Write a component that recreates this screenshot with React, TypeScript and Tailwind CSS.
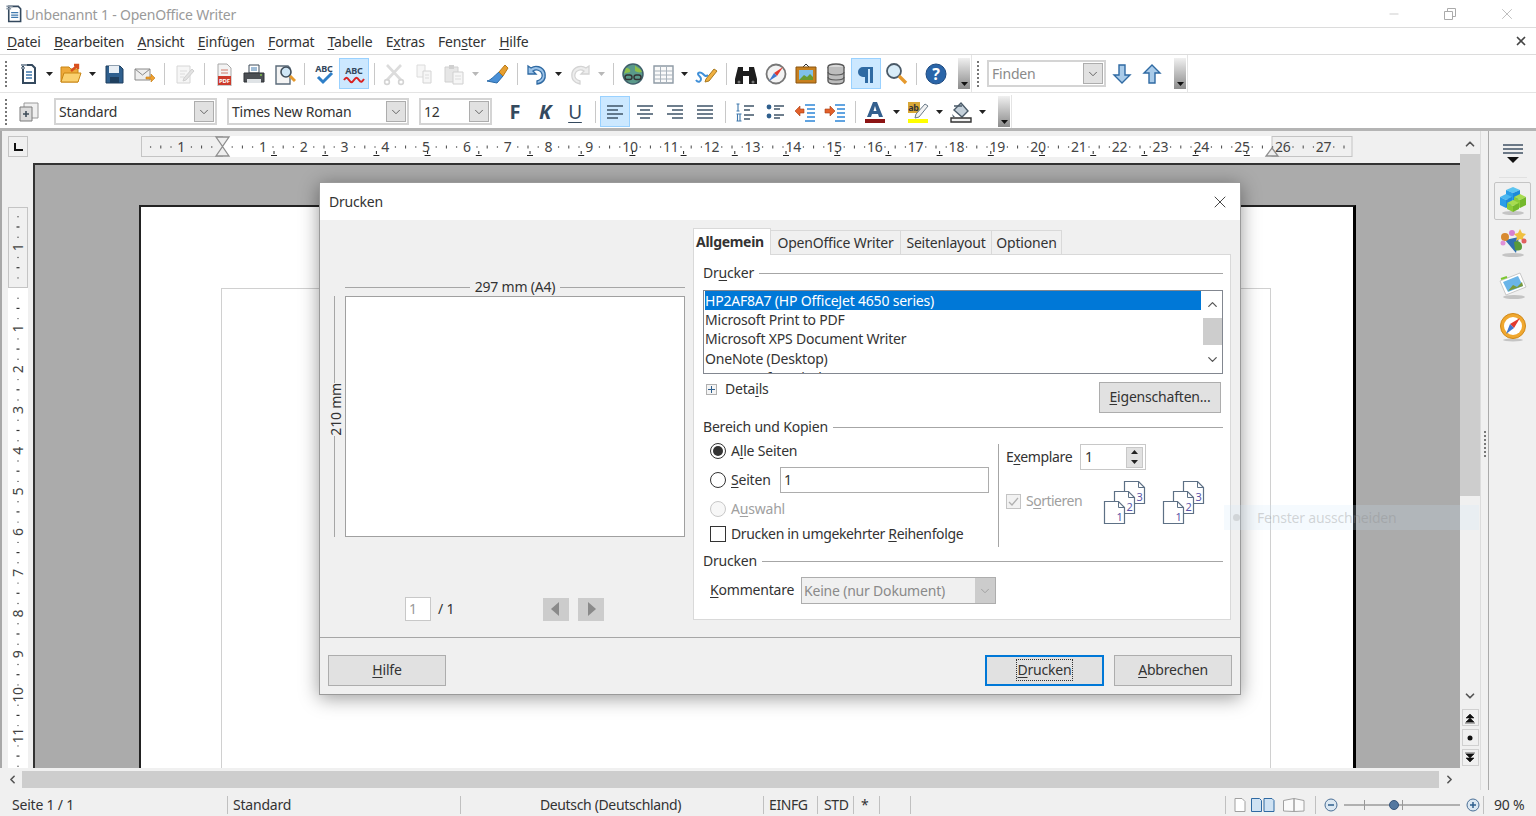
import type { ReactNode } from "react"
import { ChevronDown, ChevronUp, ChevronLeft, ChevronRight, X, Minus } from "lucide-react"

const U = ({ children }: { children: ReactNode }) => <span className="underline underline-offset-2">{children}</span>

function Svg({ children, size = 24 }: { children: ReactNode; size?: number }) {
  return (
    <svg width={size} height={size} viewBox="0 0 24 24" fill="none">
      {children}
    </svg>
  )
}

// toolbar button, every icon sits in a 30px slot
function Tb({ children, on }: { children: ReactNode; on?: boolean }) {
  return (
    <div
      className={
        on
          ? "w-[30px] h-[31px] flex items-center justify-center bg-[#cce8ff] border border-[#99d1ff]"
          : "w-[30px] h-[31px] flex items-center justify-center"
      }
    >
      {children}
    </div>
  )
}

function Caret({ faded }: { faded?: boolean }) {
  return (
    <div className="w-[13px] flex justify-center">
      <svg width="7" height="4" viewBox="0 0 7 4">
        <path d="M0 0h7L3.5 4z" fill={faded ? "#b8b8b8" : "#222"} />
      </svg>
    </div>
  )
}

const Sep = () => (
  <div className="w-[10px] flex justify-center">
    <div className="w-px h-[22px] bg-[#c8c8c8]" />
  </div>
)

const Grip = () => <div className="h-[26px] border-l-2 border-dotted border-[#777]" />

const Handle = () => (
  <div className="w-[12px] h-[31px] bg-linear-to-b from-[#f0f0f0] to-[#8c8c8c] flex items-end justify-center pb-[3px]">
    <svg width="7" height="4" viewBox="0 0 7 4">
      <path d="M0 0h7L3.5 4z" fill="#111" />
    </svg>
  </div>
)

function Combo({ text, w, faded }: { text: string; w: string; faded?: boolean }) {
  return (
    <div className={`${w} h-[27px] flex items-center bg-white border-2 border-[#d4d4d4] pl-[3px] pr-px`}>
      <span className={faded ? "flex-1 text-[#8a8a8a]" : "flex-1 text-[#333]"}>{text}</span>
      <div className="w-[20px] h-[21px] bg-[#e1e1e1] border border-[#adadad] flex items-center justify-center">
        <ChevronDown size={14} strokeWidth={1.5} className="text-[#555]" />
      </div>
    </div>
  )
}

const ic = {
  newDoc: (
    <Svg>
      <path d="M7 3h9l3 3v15H7z" fill="#fff" stroke="#34495e" strokeWidth="2" />
      <path d="M5 6h4M5 3h6" stroke="#8a98a6" strokeWidth="2" />
      <path d="M10 10h6M10 13h6M10 16h6" stroke="#3f78ad" strokeWidth="1.6" />
    </Svg>
  ),
  open: (
    <Svg>
      <path d="M2 5h8l2 2h7v13H2z" fill="#eea93a" stroke="#c98614" />
      <path d="M2 20l3-9h17l-3 9z" fill="#fad06f" stroke="#c98614" />
      <path d="M12 9l6-5M15 3h4v4" stroke="#d9501e" strokeWidth="2.4" />
    </Svg>
  ),
  save: (
    <Svg>
      <path d="M4 4h14l3 3v14H4z" fill="#2f5f8d" stroke="#1f3f5e" />
      <path d="M7 4h10v7H7z" fill="#e8eef4" />
      <path d="M8 15h9v6H8z" fill="#1f3f5e" />
    </Svg>
  ),
  mail: (
    <Svg>
      <path d="M3 7h15v11H3z" fill="#eee" stroke="#8a8a8a" />
      <path d="M3 7l7.5 6L18 7" stroke="#8a8a8a" />
      <path d="M14 15h5v-3l4 4-4 4v-3h-5z" fill="#f0a030" stroke="#c07810" strokeWidth=".6" />
    </Svg>
  ),
  edit: (
    <Svg>
      <path d="M5 4h13v17H5z" fill="#f6f6f6" stroke="#d6d6d6" />
      <path d="M8 9h7M8 12h5M8 15h4" stroke="#dcdcdc" />
      <path d="M12 16l8-9 2 2-8 9-3 1z" fill="#e2e2e2" stroke="#d0d0d0" />
    </Svg>
  ),
  pdf: (
    <Svg>
      <path d="M6 2h9l4 4v18H6z" fill="#f3f3f3" stroke="#a8a8a8" />
      <path d="M9 8h7M9 11h7" stroke="#d07a6a" />
      <path d="M6 14h13v9H6z" fill="#cc3a2b" />
      <text x="12.5" y="21" textAnchor="middle" fontSize="6" fontWeight="700" fill="#fff">PDF</text>
    </Svg>
  ),
  print: (
    <Svg>
      <path d="M7 3h10v8H7z" fill="#fff" stroke="#3f4d5a" />
      <path d="M9 6h6M9 8h6" stroke="#3f78ad" />
      <path d="M2 11h20v9H2z" fill="#4b4f54" stroke="#2f3236" />
      <path d="M5 17h14v4H5z" fill="#dfe3e6" />
      <path d="M18 13h2" stroke="#7fc24a" strokeWidth="1.5" />
    </Svg>
  ),
  preview: (
    <Svg>
      <path d="M4 4h12l2 2v16H4z" fill="#f4f4f4" stroke="#5b6b7a" strokeWidth="1.4" />
      <circle cx="14" cy="10" r="5" fill="#cfe6f6" stroke="#3f4d5a" strokeWidth="1.6" />
      <path d="M18 14l5 5" stroke="#e69a2e" strokeWidth="3" />
    </Svg>
  ),
  spell: (
    <Svg>
      <text x="12" y="10" textAnchor="middle" fontSize="9" fontWeight="700" fill="#34495e">ABC</text>
      <path d="M6 15l5 5 9-9" stroke="#2e7fc8" strokeWidth="3" />
    </Svg>
  ),
  autoSpell: (
    <Svg>
      <text x="12" y="12" textAnchor="middle" fontSize="9" fontWeight="700" fill="#34495e">ABC</text>
      <path d="M2 18c2-3 3-3 5 0s3 3 5 0 3-3 5 0 3 2 5-1" stroke="#d92020" strokeWidth="2" />
    </Svg>
  ),
  cut: (
    <Svg>
      <path d="M5 3l14 15M19 3L5 18" stroke="#dcdcdc" strokeWidth="2.6" />
      <circle cx="5" cy="20" r="2.4" stroke="#d4d4d4" strokeWidth="1.6" />
      <circle cx="19" cy="20" r="2.4" stroke="#d4d4d4" strokeWidth="1.6" />
    </Svg>
  ),
  copy: (
    <Svg>
      <path d="M5 3h8v12H5z" fill="#f6f6f6" stroke="#dcdcdc" />
      <path d="M11 9h8v12h-8z" fill="#f6f6f6" stroke="#d4d4d4" />
      <path d="M13 13h4M13 16h4" stroke="#dcdcdc" />
    </Svg>
  ),
  paste: (
    <Svg>
      <path d="M3 5h13v15H3z" fill="#e6e6e6" stroke="#d0d0d0" />
      <path d="M7 3h5v4H7z" fill="#d0d0d0" />
      <path d="M11 10h10v12H11z" fill="#f6f6f6" stroke="#d0d0d0" />
      <path d="M13 14h6M13 17h6" stroke="#dcdcdc" />
    </Svg>
  ),
  brush: (
    <Svg>
      <path d="M14 10l4 4-6 7-10-2c4-1 6-4 12-9z" fill="#4a90d6" stroke="#2a6aa8" />
      <path d="M14 10l6-7 3 3-5 8z" fill="#e8a030" stroke="#b87a18" />
    </Svg>
  ),
  undo: (
    <Svg>
      <path d="M3 4v8h8L8 9c3-2 8-1 9 3 1 3-1 6-5 7v3c6-1 9-5 8-11-2-7-10-8-14-5z" fill="#9cc3e8" stroke="#2f6aa3" strokeWidth="1.3" />
    </Svg>
  ),
  redo: (
    <Svg>
      <path d="M21 4v8h-8l3-3c-3-2-8-1-9 3-1 3 1 6 5 7v3C6 21 3 17 4 11c2-7 10-8 14-5z" fill="#ededed" stroke="#d4d4d4" strokeWidth="1.3" />
    </Svg>
  ),
  globe: (
    <Svg>
      <circle cx="12" cy="12" r="10" fill="#5a9a8a" stroke="#3f5f6a" strokeWidth="1.5" />
      <path d="M5 6c3 0 5 2 4 4-2 1-4 0-6 2M14 3c1 3 6 3 7 7-3 1-5 0-7-1z" fill="#8ec04a" />
      <rect x="4" y="13" width="7" height="4.5" rx="2.2" stroke="#333" strokeWidth="1.4" />
      <rect x="13" y="13" width="7" height="4.5" rx="2.2" stroke="#333" strokeWidth="1.4" />
    </Svg>
  ),
  table: (
    <Svg>
      <path d="M3 4h19v17H3z" fill="#fafafa" stroke="#8e9aa5" strokeWidth="1.4" />
      <path d="M3 9h19M3 13h19M3 17h19M9.5 4v17M15.5 4v17" stroke="#a8b2bb" />
    </Svg>
  ),
  draw: (
    <Svg>
      <path d="M2 18c2 3 5 2 5-1s-3-3-3-5 3-2 5 0 3 3 5 1" stroke="#3f8fd8" strokeWidth="2" />
      <path d="M12 17l8-10 3 2-8 10-4 1z" fill="#f0b040" stroke="#a87a20" />
    </Svg>
  ),
  binoculars: (
    <Svg>
      <path d="M4 5h5v4h6V5h5l3 12v5h-8v-8H9v8H1v-5z" fill="#1e1e1e" />
      <circle cx="5" cy="20" r="1.5" fill="#777" />
      <circle cx="19" cy="20" r="1.5" fill="#777" />
    </Svg>
  ),
  compass: (
    <Svg>
      <circle cx="12" cy="12" r="9.5" fill="#f3f3f3" stroke="#777" strokeWidth="1.8" />
      <path d="M19 5l-6 9-3-3z" fill="#e23a30" />
      <path d="M5 19l5-8 3 3z" fill="#3f78d0" />
    </Svg>
  ),
  gallery: (
    <Svg>
      <path d="M9 5l3-3 3 3" stroke="#333" />
      <path d="M2 5h20v16H2z" fill="#c8801e" stroke="#8a5510" />
      <path d="M5 8h14v10H5z" fill="#7fc0e8" />
      <path d="M5 18l5-5 3 2 3-3 3 3v3z" fill="#6a9a30" />
    </Svg>
  ),
  database: (
    <Svg>
      <ellipse cx="12" cy="5" rx="8" ry="3" fill="#d8d8d8" stroke="#5a5a5a" strokeWidth="1.4" />
      <path d="M4 5v14c0 4 16 4 16 0V5" fill="#bdbdbd" stroke="#5a5a5a" strokeWidth="1.4" />
      <path d="M4 10c0 4 16 4 16 0M4 15c0 4 16 4 16 0" stroke="#5a5a5a" strokeWidth="1.2" />
    </Svg>
  ),
  pilcrow: (
    <Svg>
      <path d="M11 5H9a5 5 0 0 0 0 10h2v6h3V7h2v14h3V5z" fill="#2f6aa3" />
    </Svg>
  ),
  zoom: (
    <Svg>
      <circle cx="10" cy="9" r="7" fill="#d8ecf8" stroke="#4a5a68" strokeWidth="1.8" />
      <path d="M15 14l7 7" stroke="#e69a2e" strokeWidth="3.4" />
    </Svg>
  ),
  help: (
    <Svg>
      <circle cx="12" cy="12" r="10" fill="#2a65a8" stroke="#1e4a80" />
      <text x="12" y="18" textAnchor="middle" fontSize="16" fontWeight="700" fill="#fff">?</text>
    </Svg>
  ),
  down: (
    <Svg>
      <path d="M9 3h6v10h5l-8 8-8-8h5z" fill="#a9cbe9" stroke="#2f6aa3" strokeWidth="1.4" />
    </Svg>
  ),
  up: (
    <Svg>
      <path d="M9 21h6V11h5l-8-8-8 8h5z" fill="#a9cbe9" stroke="#2f6aa3" strokeWidth="1.4" />
    </Svg>
  ),
  styles: (
    <Svg>
      <path d="M7 3h14v15H7z" fill="#f0f0f0" stroke="#9a9a9a" />
      <path d="M3 7h12v14H3z" fill="#dcdcdc" stroke="#7a7a7a" />
      <path d="M9 11v6M6 14h6" stroke="#3f4d5a" strokeWidth="1.6" />
    </Svg>
  ),
  left: (
    <Svg>
      <path d="M4 6h16M4 10h11M4 14h16M4 18h11" stroke="#3f5468" strokeWidth="1.7" />
    </Svg>
  ),
  center: (
    <Svg>
      <path d="M4 6h16M7 10h10M4 14h16M7 18h10" stroke="#3f5468" strokeWidth="1.7" />
    </Svg>
  ),
  right: (
    <Svg>
      <path d="M4 6h16M9 10h11M4 14h16M9 18h11" stroke="#3f5468" strokeWidth="1.7" />
    </Svg>
  ),
  justify: (
    <Svg>
      <path d="M4 6h16M4 10h16M4 14h16M4 18h16" stroke="#3f5468" strokeWidth="1.7" />
    </Svg>
  ),
  numbers: (
    <Svg>
      <path d="M11 6h10M11 10h6M11 15h10M11 19h6" stroke="#3f5468" strokeWidth="1.7" />
      <path d="M5 4v7M3.5 4h3M3.5 11h3M3.5 14h5M3.5 21h5M4.500 14v7M7 14v7" stroke="#3f78ad" strokeWidth="1.1" />
    </Svg>
  ),
  bullets: (
    <Svg>
      <circle cx="6" cy="7" r="2.4" fill="#2f5f8d" />
      <circle cx="6" cy="16" r="2.4" fill="#2f5f8d" />
      <path d="M11 6h10M11 9h6M11 15h10M11 18h6" stroke="#3f5468" strokeWidth="1.7" />
    </Svg>
  ),
  outdent: (
    <Svg>
      <path d="M12 5h10M14 9h8M14 13h8M14 17h8M12 21h10" stroke="#2e86d8" strokeWidth="1.6" />
      <path d="M11 9H7V6l-5 5 5 5v-3h4z" fill="#e2602a" stroke="#a83c10" strokeWidth=".6" />
    </Svg>
  ),
  indent: (
    <Svg>
      <path d="M12 5h10M14 9h8M14 13h8M14 17h8M12 21h10" stroke="#2e86d8" strokeWidth="1.6" />
      <path d="M2 9h5V6l5 5-5 5v-3H2z" fill="#e2602a" stroke="#a83c10" strokeWidth=".6" />
    </Svg>
  ),
  fontColor: (
    <Svg>
      <path d="M10 2h4l6 15h-4l-1-3H9l-1 3H4z" fill="#34608e" />
      <path d="M10.5 11h3L12 6z" fill="#fff" />
      <path d="M2 19h20v4H2z" fill="#8c1414" />
    </Svg>
  ),
  highlight: (
    <Svg>
      <path d="M2 2h12v11H2z" fill="#d8a838" />
      <text x="7.5" y="11" textAnchor="middle" fontSize="9" fontWeight="700" fill="#333">ab</text>
      <path d="M10 14l9-10 3 2-9 11-4 1z" fill="#f2f2f2" stroke="#6a7a88" />
      <path d="M2 19h20v4H2z" fill="#ffff00" />
    </Svg>
  ),
  bg: (
    <Svg>
      <path d="M5 10l7-7 7 8-6 6z" fill="#c4d0da" stroke="#4a5a68" strokeWidth="1.4" />
      <path d="M5 6h8" stroke="#4a5a68" strokeWidth="1.5" />
      <path d="M3 14l1 3h2z" fill="#4a5a68" />
      <path d="M2 18h20v4H2z" fill="#f2f2f2" stroke="#333" strokeWidth="1.4" />
    </Svg>
  ),
}

function HRuler() {
  const cm = Array.from({ length: 30 }, (_, i) => i - 2)
  const tabs = Array.from({ length: 20 }, (_, i) => 133 + i * 51.2)
  return (
    <svg width="1212" height="21" viewBox="0 0 1212 21" className="text-[14px]">
      <rect x="81" y="0" width="1050" height="21" fill="#fff" />
      <rect x="0.5" y="0.5" width="81" height="20" fill="#f0f0f0" stroke="#c4c4c4" />
      <rect x="1131" y="0.5" width="80" height="20" fill="#f0f0f0" stroke="#c4c4c4" />
      {cm.map((k) => {
        const x = 81 + k * 40.8
        return (
          <g key={k}>
            {k !== 0 && k > -2 && (
              <text x={x} y="16" textAnchor="middle" fill="#444">
                {k < 0 ? -k : k}
              </text>
            )}
            {x + 10 < 1205 && x + 10 > 0 && <circle cx={x + 10.2} cy="11" r=".7" fill="#444" />}
            {x + 20 < 1205 && x + 20 > 0 && <path d={`M${x + 20.4} 9.5v3`} stroke="#444" />}
            {x + 30 < 1205 && x + 30 > 0 && <circle cx={x + 30.6} cy="11" r=".7" fill="#444" />}
          </g>
        )
      })}
      {tabs.map((x) => (
        <path key={x} d={`M${x} 15v3M${x - 3} 19.5h6`} stroke="#222" />
      ))}
      <path d="M75 1h13l-6.5 9.5 6.5 9.5H75l6.5-9.5z" fill="#eee" stroke="#8e8e8e" strokeWidth="1.3" />
      <path d="M1131 12l6 8h-12z" fill="#eee" stroke="#8e8e8e" strokeWidth="1.3" />
    </svg>
  )
}

function VRuler() {
  const nums = [-1, 1, 2, 3, 4, 5, 6, 7, 8, 9, 10, 11]
  const rows = Array.from({ length: 14 }, (_, i) => i - 2)
  return (
    <svg width="20" height="561" viewBox="0 0 20 561" className="text-[14px]">
      <rect x="0" y="81" width="20" height="480" fill="#fff" />
      <rect x="0.5" y="0.5" width="19" height="80" fill="#f0f0f0" stroke="#c4c4c4" />
      {nums.map((k) => {
        const y = 81 + k * 40.7
        return (
          <text key={k} x="0" y="0" textAnchor="middle" fill="#444" transform={`translate(15 ${y}) rotate(-90)`}>
            {Math.abs(k)}
          </text>
        )
      })}
      {rows.map((k) => {
        const y = 81 + k * 40.7
        return (
          <g key={k}>
            <circle cx="10" cy={y + 10.2} r=".7" fill="#444" />
            <path d={`M8.5 ${y + 20.4}h3`} stroke="#333" strokeWidth="1.2" />
            <circle cx="10" cy={y + 30.6} r=".7" fill="#444" />
          </g>
        )
      })}
    </svg>
  )
}

function Collate() {
  const pages = [
    { x: 21.5, y: 0.5, n: "3" },
    { x: 11.5, y: 10.5, n: "2" },
    { x: 1.5, y: 20.5, n: "1" },
  ]
  return (
    <svg width="48" height="44" viewBox="0 0 48 44" className="text-[11px]">
      {pages.map((p) => (
        <g key={p.n}>
          <path d={`M${p.x} ${p.y}h14l6 6v16h-20z`} fill="#fff" stroke="#5d7085" strokeWidth="1.2" />
          <path d={`M${p.x + 14} ${p.y}v6h6`} fill="none" stroke="#5d7085" />
          <text x={p.x + 15} y={p.y + 19} textAnchor="middle" fill="#5a55a8">
            {p.n}
          </text>
        </g>
      ))}
    </svg>
  )
}

const Section = ({ children }: { children: ReactNode }) => (
  <div className="h-5 flex items-center gap-[5px]">
    <span>{children}</span>
    <div className="flex-1 border-t border-[#a6a6a6]" />
  </div>
)

const Radio = ({ on, off }: { on?: boolean; off?: boolean }) => (
  <div
    className={
      off
        ? "w-[16px] h-[16px] rounded-full border border-[#c8c8c8] bg-[#f7f7f7]"
        : "w-[16px] h-[16px] rounded-full border border-[#333] bg-white flex items-center justify-center"
    }
  >
    {on && <div className="w-[10px] h-[10px] rounded-full bg-[#333]" />}
  </div>
)

const DlgButton = ({ children, w, primary }: { children: ReactNode; w: string; primary?: boolean }) => (
  <div
    className={
      primary
        ? `${w} h-[31px] flex items-center justify-center bg-[#e1e1e1] border-2 border-[#0078d7] pb-[2px]`
        : `${w} h-[31px] flex items-center justify-center bg-[#e1e1e1] border border-[#adadad] pb-[2px]`
    }
  >
    {children}
  </div>
)

function PrintDialog() {
  return (
    <div className="absolute left-[319px] top-[182px] w-[922px] h-[513px] flex flex-col bg-[#f0f0f0] border border-[#9a9a9a] shadow-[0_3px_18px_rgba(0,0,0,0.4)] text-[#333]">
      <div className="h-[37px] bg-white flex items-center justify-between pl-[9px] pr-[10px]">
        <span>Drucken</span>
        <X size={20} strokeWidth={1} className="text-[#222]" />
      </div>

      <div className="h-[417px] flex">
        {/* preview side */}
        <div className="w-[373px] pl-[15px] pt-[56px]">
          <div className="ml-[10px] w-[340px] h-[20px] flex items-center gap-[5px] pt-[2px]">
            <div className="flex-1 border-t border-[#a6a6a6]" />
            <span>297 mm (A4)</span>
            <div className="flex-1 border-t border-[#a6a6a6]" />
          </div>
          <div className="h-[241px] flex">
            <div className="w-[10px] -ml-px flex flex-col items-start">
              <div className="h-[87px] border-l border-[#a6a6a6]" />
              <span className="[writing-mode:vertical-rl] rotate-180 -ml-[10px] py-[3px] leading-[18px]">210 mm</span>
              <div className="flex-1 border-l border-[#a6a6a6]" />
            </div>
            <div className="w-[340px] ml-px bg-white border border-[#a0a0a0]" />
          </div>
          <div className="mt-[60px] ml-[70px] h-[24px] flex items-center">
            <div className="w-[26px] h-[24px] bg-white border border-[#c8c8c8] pl-[3px] text-[#999] leading-[22px]">1</div>
            <span className="ml-[7px] w-[105px]">/ 1</span>
            <div className="w-[26px] h-[23px] bg-[#cccccc] flex items-center justify-center">
              <svg width="10" height="14" viewBox="0 0 10 14"><path d="M8 0v14L0 7z" fill="#8a8a8a" /></svg>
            </div>
            <div className="ml-[9px] w-[26px] h-[23px] bg-[#cccccc] flex items-center justify-center">
              <svg width="10" height="14" viewBox="0 0 10 14"><path d="M2 0v14l8-7z" fill="#8a8a8a" /></svg>
            </div>
          </div>
        </div>

        {/* tabs side */}
        <div className="w-[538px] pt-[8px]">
          <div className="h-[26px] flex items-end">
            <div className="w-[78px] h-[27px] -mb-px relative z-10 bg-white border-t border-x border-[#d9d9d9] flex items-center pl-[2px] font-bold tracking-[-0.3px]">
              Allgemein
            </div>
            <div className="w-[130px] h-[24px] border-t border-r border-[#d9d9d9] flex items-center justify-center">OpenOffice Writer</div>
            <div className="w-[91px] h-[24px] border-t border-r border-[#d9d9d9] flex items-center justify-center">Seitenlayout</div>
            <div className="w-[70px] h-[24px] border-t border-r border-[#d9d9d9] flex items-center justify-center">Optionen</div>
          </div>
          <div className="h-[366px] bg-white border border-[#d9d9d9] pl-[9px] pr-[7px] pt-[8px]">
            <Section>
              Dr<U>u</U>cker
            </Section>
            <div className="mt-[7px] h-[84px] border border-[#828790] flex overflow-hidden">
              <div className="flex-1 pl-px mr-[2px]">
                <div className="h-[19px] bg-[#0078d7] text-white flex items-center">HP2AF8A7 (HP OfficeJet 4650 series)</div>
                <div className="h-[19px] flex items-center">Microsoft Print to PDF</div>
                <div className="h-[20px] flex items-center">Microsoft XPS Document Writer</div>
                <div className="h-[19px] flex items-center">OneNote (Desktop)</div>
                <div className="h-[19px] flex items-center">OneNote for Windows 10</div>
              </div>
              <div className="w-[19px] flex flex-col items-center">
                <div className="h-[27px] flex items-center"><ChevronUp size={15} strokeWidth={2} className="text-[#555]" /></div>
                <div className="w-full h-[27px] bg-[#cdcdcd]" />
                <div className="flex-1 flex items-center"><ChevronDown size={15} strokeWidth={2} className="text-[#555]" /></div>
              </div>
            </div>
            <div className="mt-[8px] h-[27px] flex justify-between pr-[2px]">
              <div className="-mt-[3px] pl-[3px] h-[20px] flex items-center gap-[8px]">
                <div className="w-[11px] h-[11px] border border-[#b0b0b0] bg-[#f4f4f4] flex items-center justify-center">
                  <svg width="7" height="7" viewBox="0 0 7 7"><path d="M3.5 0v7M0 3.5h7" stroke="#2f5f8d" /></svg>
                </div>
                <span>Deta<U>i</U>ls</span>
              </div>
              <DlgButton w="w-[122px]">
                <span><U>E</U>igenschaften...</span>
              </DlgButton>
            </div>

            <div className="mt-[8px]">
              <Section>Bereich und Kopien</Section>
            </div>
            <div className="mt-[4px] h-[106px] flex">
              <div className="w-[295px] pl-[7px]">
                <div className="h-5 flex items-center gap-[5px]">
                  <Radio on />
                  <span>A<U>l</U>le Seiten</span>
                </div>
                <div className="mt-[6px] h-[26px] flex items-center gap-[5px]">
                  <Radio />
                  <span className="w-[44px]"><U>S</U>eiten</span>
                  <div className="w-[209px] h-[26px] border border-[#adadad] bg-white pl-[3px] leading-[24px]">1</div>
                </div>
                <div className="mt-[6px] h-5 flex items-center gap-[5px] text-[#a0a0a0]">
                  <Radio off />
                  <span>A<U>u</U>swahl</span>
                </div>
                <div className="mt-[5px] h-5 flex items-center gap-[5px]">
                  <div className="w-[16px] h-[16px] border border-[#333] bg-white" />
                  <span className="tracking-[-0.35px]">Drucken in umgekehrter <U>R</U>eihenfolge</span>
                </div>
              </div>
              <div className="mt-[3px] border-l border-[#a6a6a6] pl-[7px] flex-1">
                <div className="h-[26px] flex items-center">
                  <span className="w-[74px] -mt-px tracking-[-0.35px]">E<U>x</U>emplare</span>
                  <div className="w-[66px] h-[26px] border border-[#c8c8c8] bg-white flex items-center pl-[4px] pr-[2px]">
                    <span className="flex-1">1</span>
                    <div className="w-[17px] h-[21px] bg-[#e1e1e1] border border-[#c8c8c8] flex flex-col items-center justify-around">
                      <svg width="7" height="4" viewBox="0 0 7 4"><path d="M0 4h7L3.5 0z" fill="#222" /></svg>
                      <svg width="7" height="4" viewBox="0 0 7 4"><path d="M0 0h7L3.5 4z" fill="#222" /></svg>
                    </div>
                  </div>
                </div>
                <div className="mt-[11px] h-[44px] flex items-center">
                  <div className="w-[15px] h-[15px] -mt-[3px] border border-[#c4c4c4] bg-[#f2f2f2] flex items-center justify-center">
                    <svg width="11" height="11" viewBox="0 0 11 11"><path d="M1 6l3 3 6-7" stroke="#b0b0b0" strokeWidth="1.3" fill="none" /></svg>
                  </div>
                  <span className="ml-[5px] w-[77px] -mt-[5px] text-[#a0a0a0] tracking-[-0.5px]">S<U>o</U>rtieren</span>
                  <Collate />
                  <div className="ml-[11px]"><Collate /></div>
                </div>
              </div>
            </div>
            <div className="mt-[4px]">
              <Section>Drucken</Section>
            </div>
            <div className="mt-[6px] h-[27px] pl-[7px] flex items-center">
              <span className="w-[91px] -mt-px"><U>K</U>ommentare</span>
              <div className="w-[195px] h-[27px] bg-[#f0f0f0] border border-[#adadad] flex items-center pl-[2px] text-[#8a8a8a]">
                <span className="flex-1">Keine (nur Dokument)</span>
                <div className="w-[20px] h-full bg-[#cccccc] flex items-center justify-center">
                  <ChevronDown size={14} strokeWidth={1.5} className="text-[#9a9a9a]" />
                </div>
              </div>
            </div>
          </div>
        </div>
      </div>

      <div className="flex-1 border-t border-[#a6a6a6] px-[8px] pt-[17px] flex">
        <DlgButton w="w-[118px]">
          <span><U>H</U>ilfe</span>
        </DlgButton>
        <div className="flex-1" />
        <DlgButton w="w-[119px]" primary>
          <span className="outline-1 outline-dotted outline-[#333]"><U>D</U>rucken</span>
        </DlgButton>
        <div className="ml-[10px]">
          <DlgButton w="w-[118px]">
            <span><U>A</U>bbrechen</span>
          </DlgButton>
        </div>
      </div>
    </div>
  )
}

function SidePanelIcon() {
  return (
    <svg width="30" height="30" viewBox="0 0 30 30">
      <ellipse cx="15" cy="27" rx="11" ry="2" fill="#c4c4c4" />
      {/* back cube */}
      <path d="M15 1l7 3-7 3-7-3z" fill="#5cc4f0" />
      <path d="M8 4l7 3v8l-7-3z" fill="#2a9ee8" />
      <path d="M22 4l-7 3v8l7-3z" fill="#1e8ad8" />
      {/* left cube */}
      <path d="M8 8l6 3-6 3-6-3z" fill="#4cb8f0" />
      <path d="M2 11l6 3v8l-6-3z" fill="#2a9ee8" />
      <path d="M14 11l-6 3v8l6-3z" fill="#1e8ad8" />
      {/* right cube */}
      <path d="M22 8l6 3-6 3-6-3z" fill="#a8dc50" />
      <path d="M16 11l6 3v8l-6-3z" fill="#8ccc38" />
      <path d="M28 11l-6 3v8l6-3z" fill="#74b82c" />
      {/* front cube */}
      <path d="M15 14l6 3-6 3-6-3z" fill="#a8dc50" />
      <path d="M9 17l6 3v6l-6-3z" fill="#8ccc38" />
      <path d="M21 17l-6 3v6l6-3z" fill="#74b82c" />
    </svg>
  )
}

export default function App() {
  const menus: ReactNode[] = [
    <><U>D</U>atei</>,
    <><U>B</U>earbeiten</>,
    <><U>A</U>nsicht</>,
    <><U>E</U>infügen</>,
    <><U>F</U>ormat</>,
    <><U>T</U>abelle</>,
    <>E<U>x</U>tras</>,
    <>Fen<U>s</U>ter</>,
    <><U>H</U>ilfe</>,
  ]

  return (
    <div className="relative w-[1536px] h-[816px] overflow-hidden bg-white flex flex-col font-['Noto_Sans',sans-serif] text-[14px] leading-5 text-[#333] tracking-[-0.2px]">
      {/* title bar */}
      <div className="h-[28px] flex items-center border-b border-[#dcdcdc] pl-[4px]">
        <Svg size={19}>
          <path d="M6 3h12l3 3v16H6z" fill="#fff" stroke="#34495e" strokeWidth="2" />
          <path d="M3 6h6M3 3h8" stroke="#8a98a6" strokeWidth="2" />
          <path d="M9 11h9M9 14h9M9 17h9" stroke="#3f78ad" strokeWidth="1.6" />
        </Svg>
        <span className="ml-[2px] mt-[2px] text-[#9a9a9a]">Unbenannt 1 - OpenOffice Writer</span>
        <div className="flex-1" />
        <Minus size={14} strokeWidth={1} className="text-[#aaa] mr-[43px]" />
        <svg width="12" height="12" viewBox="0 0 12 12" className="mr-[42px]">
          <path d="M.5 3.5h8v8h-8zM3.5 3.5v-3h8v8h-3" fill="none" stroke="#aaa" />
        </svg>
        <X size={18} strokeWidth={1} className="text-[#aaa] mr-[20px]" />
      </div>

      {/* menu bar */}
      <div className="h-[27px] flex items-center border-b border-[#dcdcdc] pl-[7px] pr-[8px] text-[#333]">
        <div className="flex gap-[13.25px] mt-[2px]">
          {menus.map((m, i) => (
            <span key={i}>{m}</span>
          ))}
        </div>
        <div className="flex-1" />
        <X size={14} strokeWidth={3} className="text-[#444]" />
      </div>

      {/* standard toolbar */}
      <div className="h-[38px] flex items-center border-b border-[#e4e4e4]">
        <div className="w-[13px] pl-[5px]"><Grip /></div>
        <Tb>{ic.newDoc}</Tb>
        <Caret />
        <Tb>{ic.open}</Tb>
        <Caret />
        <Tb>{ic.save}</Tb>
        <Tb>{ic.mail}</Tb>
        <Sep />
        <Tb>{ic.edit}</Tb>
        <Sep />
        <Tb>{ic.pdf}</Tb>
        <Tb>{ic.print}</Tb>
        <Tb>{ic.preview}</Tb>
        <Sep />
        <Tb>{ic.spell}</Tb>
        <Tb on>{ic.autoSpell}</Tb>
        <Sep />
        <Tb>{ic.cut}</Tb>
        <Tb>{ic.copy}</Tb>
        <Tb>{ic.paste}</Tb>
        <Caret faded />
        <Tb>{ic.brush}</Tb>
        <Sep />
        <Tb>{ic.undo}</Tb>
        <Caret />
        <Tb>{ic.redo}</Tb>
        <Caret faded />
        <Sep />
        <Tb>{ic.globe}</Tb>
        <Tb>{ic.table}</Tb>
        <Caret />
        <Tb>{ic.draw}</Tb>
        <Sep />
        <Tb>{ic.binoculars}</Tb>
        <Tb>{ic.compass}</Tb>
        <Tb>{ic.gallery}</Tb>
        <Tb>{ic.database}</Tb>
        <Tb on>{ic.pilcrow}</Tb>
        <Tb>{ic.zoom}</Tb>
        <Sep />
        <Tb>{ic.help}</Tb>
        <div className="ml-[7px] h-full flex items-center border-r border-[#e4e4e4] pr-px"><Handle /></div>
        <div className="ml-[5px] mr-[8px]"><Grip /></div>
        <Combo text="Finden" w="w-[119px]" faded />
        <div className="ml-[1px]"><Tb>{ic.down}</Tb></div>
        <Tb>{ic.up}</Tb>
        <div className="ml-[7px] h-full flex items-center border-r border-[#e4e4e4] pr-px"><Handle /></div>
      </div>

      {/* formatting toolbar */}
      <div className="h-[35px] flex items-center pt-[2px]">
        <div className="w-[14px] pl-[5px]"><Grip /></div>
        <Tb>{ic.styles}</Tb>
        <div className="ml-[10px]"><Combo text="Standard" w="w-[163px]" /></div>
        <div className="ml-[10px]"><Combo text="Times New Roman" w="w-[182px]" /></div>
        <div className="ml-[10px] mr-[8px]"><Combo text="12" w="w-[73px]" /></div>
        <Tb><span className="text-[20px] font-bold text-[#34495e]">F</span></Tb>
        <Tb><span className="text-[20px] font-bold italic text-[#34495e]">K</span></Tb>
        <Tb>
          <span className="text-[19px] text-[#34495e] underline underline-offset-3">U</span>
        </Tb>
        <Sep />
        <Tb on>{ic.left}</Tb>
        <Tb>{ic.center}</Tb>
        <Tb>{ic.right}</Tb>
        <Tb>{ic.justify}</Tb>
        <Sep />
        <Tb>{ic.numbers}</Tb>
        <Tb>{ic.bullets}</Tb>
        <Tb>{ic.outdent}</Tb>
        <Tb>{ic.indent}</Tb>
        <Sep />
        <Tb>{ic.fontColor}</Tb>
        <Caret />
        <Tb>{ic.highlight}</Tb>
        <Caret />
        <Tb>{ic.bg}</Tb>
        <Caret />
        <div className="ml-[9px] h-full flex items-center border-r border-[#e4e4e4] pr-px"><Handle /></div>
      </div>

      {/* workspace */}
      <div className="flex-1 min-h-0 flex border-t-[3px] border-[#b4b4b4] bg-[#f0f0f0]">
        <div className="w-[1460px] flex flex-col">
          <div className="h-[32px] pt-[5px] flex border-l-2 border-[#a8a8a8]">
            <div className="ml-[6px] w-[20px] h-[21px] border border-[#c4c4c4] flex items-center justify-center">
              <svg width="9" height="8" viewBox="0 0 9 8"><path d="M1 0v7h8" stroke="#111" strokeWidth="2" fill="none" /></svg>
            </div>
            <div className="ml-[113px]"><HRuler /></div>
          </div>
          <div className="h-[605px] flex">
            <div className="w-[33px] shrink-0 border-l-2 border-[#a8a8a8] pl-[6px] pt-[44px]"><VRuler /></div>
            <div className="flex-1 bg-[#ababab] border-t-2 border-l-2 border-[#333] pl-[104px] pt-[40px]">
              <div className="w-[1217px] h-[563px] bg-white border-t-2 border-l-2 border-[#222] border-r-[3px] border-r-black pl-[80px] pr-[82px] pt-[81px]">
                <div className="h-full border-t border-x border-[#d0d0d0]" />
              </div>
            </div>
          </div>
          <div className="flex-1 flex items-center">
            <ChevronLeft size={13} strokeWidth={3} className="ml-[6px] mr-[3px] text-[#555]" />
            <div className="w-[1417px] h-[17px] bg-[#cdcdcd]" />
            <ChevronRight size={13} strokeWidth={3} className="ml-[4px] text-[#555]" />
          </div>
        </div>

        <div className="w-[20px] flex flex-col items-center bg-[#f0f0f0]">
          <div className="h-[23px] pt-[3px] flex items-center"><ChevronUp size={14} strokeWidth={3} className="text-[#555]" /></div>
          <div className="w-full h-[342px] bg-[#cdcdcd]" />
          <div className="flex-1" />
          <div className="h-[20px] flex items-center"><ChevronDown size={14} strokeWidth={3} className="text-[#555]" /></div>
          {["M3 7l4-4 4 4zM3 11l4-4 4 4z M2 12h10", "dot", "M3 3l4 4 4-4zM3 7l4 4 4-4z M2 2h10"].map((d) => (
            <div key={d} className="mt-[3px] w-[17px] h-[17px] border border-[#d0d0d0] flex items-center justify-center">
              <svg width="14" height="14" viewBox="0 0 14 14">
                {d === "dot" ? <circle cx="7" cy="7" r="2.5" fill="#111" /> : <path d={d} fill="#111" stroke="#111" strokeWidth=".6" />}
              </svg>
            </div>
          ))}
          <div className="h-[24px]" />
        </div>

        <div className="w-[9px] border-r border-[#aaaaaa] border-l border-l-[#dcdcdc] flex flex-col justify-center items-center gap-[2px] pb-[34px]">
          {[0, 1, 2, 3, 4, 5, 6].map((i) => (
            <div key={i} className="w-[2px] h-[2px] bg-[#777]" />
          ))}
        </div>

        <div className="flex-1 flex flex-col items-center pt-[12px]">
          <svg width="24" height="22" viewBox="0 0 24 22">
            <path d="M2 2h20M2 6h20M2 10h20" stroke="#6b7886" strokeWidth="2" />
            <path d="M6 14h12l-6 6z" fill="#111" />
          </svg>
          <div className="mt-[12px] w-[28px] border-t border-[#e0e0e0]" />
          <div className="mt-[4px] w-[37px] h-[38px] border border-[#c4c4c4] rounded-[2px] flex items-center justify-center">
            <SidePanelIcon />
          </div>
          <div className="mt-[8px]">
            <svg width="30" height="30" viewBox="0 0 30 30">
              <ellipse cx="15" cy="27" rx="11" ry="2" fill="#c4c4c4" />
              <path d="M7 12l14-3-3 16z" fill="#2f6fb0" />
              <path d="M16 14c5-2 8 1 8 5s-4 4-7 3z" fill="#5a9a3a" />
              <circle cx="7" cy="9" r="4" fill="#d88a30" />
              <circle cx="14" cy="5" r="3" fill="#d880d0" />
              <path d="M22 1l2 4 4 1-3 3 1 4-4-2-4 2 1-4-3-3 4-1z" fill="#f0c040" />
              <circle cx="26" cy="13" r="2.5" fill="#e06060" />
              <circle cx="5" cy="15" r="2.5" fill="#e090d8" />
            </svg>
          </div>
          <div className="mt-[12px]">
            <svg width="30" height="30" viewBox="0 0 30 30">
              <ellipse cx="16" cy="27" rx="11" ry="2" fill="#c4c4c4" />
              <path d="M2 11l20-8 6 14-20 8z" fill="#fff" stroke="#c8c8c8" />
              <path d="M5 12l15-6 5 10-15 6z" fill="#6ab4e8" />
              <path d="M10 21l5-6 4 2 5-5 1 4z" fill="#7a9a3a" />
              <path d="M3 9l6-2" stroke="#7cc830" strokeWidth="2" />
            </svg>
          </div>
          <div className="mt-[12px]">
            <svg width="30" height="30" viewBox="0 0 30 30">
              <ellipse cx="15" cy="28" rx="10" ry="1.5" fill="#c4c4c4" />
              <circle cx="15" cy="14" r="12.5" fill="#f0a830" stroke="#d08818" />
              <circle cx="15" cy="14" r="9" fill="#fff" />
              <path d="M22 6l-6 10-4-4z" fill="#e23a30" />
              <path d="M8 22l4-10 4 4z" fill="#3f78d0" />
            </svg>
          </div>
        </div>
      </div>

      {/* status bar */}
      <div className="h-[26px] flex items-center bg-[#f0f0f0] pt-[4px]">
        <div className="w-[227px] pl-[12px]">Seite 1 / 1</div>
        <div className="w-[233px] h-[18px] border-l border-[#c0c0c0] pl-[5px] flex items-center">Standard</div>
        <div className="w-[303px] h-[18px] border-l border-[#c0c0c0] flex items-center justify-center tracking-[-0.35px] pr-[3px]">Deutsch (Deutschland)</div>
        <div className="w-[54px] h-[18px] border-l border-[#c0c0c0] pl-[5px] flex items-center tracking-[-0.4px]">EINFG</div>
        <div className="w-[36px] h-[18px] border-l border-[#c0c0c0] pl-[6px] flex items-center tracking-[-0.4px]">STD</div>
        <div className="w-[26px] h-[18px] border-l border-[#c0c0c0] pl-[7px] flex items-center">*</div>
        <div className="w-[31px] h-[18px] border-l border-[#c0c0c0]" />
        <div className="w-[315px] h-[18px] border-l border-[#c0c0c0]" />
        <div className="w-[90px] h-[18px] border-l border-[#c0c0c0] pl-[8px] flex items-center gap-[5px]">
          <svg width="12" height="14" viewBox="0 0 12 14"><path d="M1 .5h7l3 3v10H1z" fill="#fff" stroke="#a0a0a0" /></svg>
          <svg width="24" height="14" viewBox="0 0 24 14">
            <path d="M.5.5h8l2 2v11H.5zM13 .5h8l2 2v11H13z" fill="#cfe2f3" stroke="#2f6aa3" />
          </svg>
          <svg width="22" height="14" viewBox="0 0 22 14" className="ml-[3px]">
            <path d="M.5 2.5 11 .5v13L.5 13zM11 .5l10 2V13l-10 .5z" fill="#fafafa" stroke="#a0a0a0" />
          </svg>
        </div>
        <div className="w-[168px] h-[18px] border-l border-[#c0c0c0] pl-[8px] flex items-center">
          <svg width="14" height="14" viewBox="0 0 14 14"><circle cx="7" cy="7" r="6" fill="#dce8f2" stroke="#4a6f96" /><path d="M4 7h6" stroke="#2f5f8d" strokeWidth="1.5" /></svg>
          <div className="relative ml-[6px] w-[116px] h-[2px] bg-[#b0b0b0]">
            <div className="absolute left-[20px] -top-[4px] w-px h-[10px] bg-[#999]" />
            <div className="absolute left-[58px] -top-[4px] w-px h-[10px] bg-[#999]" />
            <div className="absolute left-[45px] -top-[4px] w-[10px] h-[10px] rounded-full bg-[#5478a0] border border-[#37557a]" />
          </div>
          <svg width="14" height="14" viewBox="0 0 14 14" className="ml-[6px]"><circle cx="7" cy="7" r="6" fill="#dce8f2" stroke="#4a6f96" /><path d="M4 7h6M7 4v6" stroke="#2f5f8d" strokeWidth="1.5" /></svg>
        </div>
        <div className="h-[18px] border-l border-[#c0c0c0] pl-[10px] flex items-center">90 %</div>
      </div>

      <PrintDialog />

      {/* tooltip fading out over the page */}
      <div className="absolute left-[1224px] top-[505px] w-[255px] h-[25px] bg-[#cfe8fb]/20 flex items-center pl-[9px] text-[#8a8a8a]/35">
        <div className="w-[7px] h-[7px] rounded-full bg-[#8a8a8a]/25" />
        <span className="ml-[17px]">Fenster ausschneiden</span>
      </div>
    </div>
  )
}
